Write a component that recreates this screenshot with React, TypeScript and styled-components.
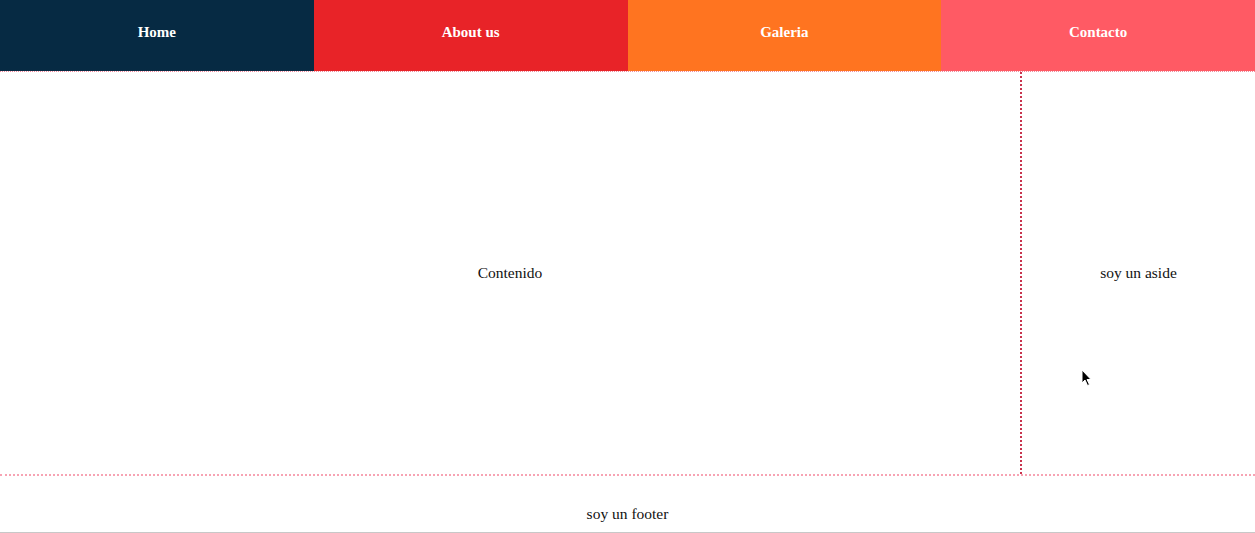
import styled, { createGlobalStyle } from 'styled-components';

const GlobalStyle = createGlobalStyle`
	* {
		box-sizing: border-box;
	}
	html,
	body {
		margin: 0;
		padding: 0;
		background: #fff;
	}
	body {
		font-family: 'Liberation Serif', 'Times New Roman', serif;
		font-size: 15.5px;
		color: #111;
	}
`;

const links = [
	{ label: 'Home', color: '#062a43' },
	{ label: 'About us', color: '#e82328' },
	{ label: 'Galeria', color: '#ff7420' },
	{ label: 'Contacto', color: '#ff5a64' },
];

function App() {
	return (
		<>
			<GlobalStyle />
			<Page>
				<Nav>
					{links.map((link) => (
						<NavItem key={link.label} $bg={link.color}>
							{link.label}
						</NavItem>
					))}
				</Nav>
				<Body>
					<Main>Contenido</Main>
					<Aside>
						soy un aside
						<Cursor viewBox="0 0 12 18" width="12" height="18">
							<path d="M1 1 L1 14 L4 11 L6.5 16.5 L8.5 15.6 L6 10.5 L10 10.5 Z" fill="#000" stroke="#fff" strokeWidth="1" />
						</Cursor>
					</Aside>
				</Body>
				<Footer>soy un footer</Footer>
			</Page>
		</>
	);
}

export default App;

const Page = styled.div`
	width: 1255px;
	height: 533px;
	display: flex;
	flex-flow: column nowrap;
	overflow: hidden;
`;

const Nav = styled.nav`
	display: grid;
	grid-template-columns: repeat(4, 1fr);
	height: 72px;
	border-bottom: 1px dotted #f08a9c;
`;

const NavItem = styled.a<{ $bg: string }>`
	display: flex;
	align-items: center;
	justify-content: center;
	padding-bottom: 7px;
	background-color: ${({ $bg }) => $bg};
	color: #fff;
	font-weight: bold;
	font-size: 15px;
`;

const Body = styled.div`
	display: flex;
	height: 404px;
	border-bottom: 2px dotted #f7a3b3;
`;

const Main = styled.main`
	flex: 0 0 1020px;
	display: flex;
	align-items: center;
	justify-content: center;
`;

const Aside = styled.aside`
	flex: 1;
	display: flex;
	align-items: center;
	justify-content: center;
	position: relative;
	border-left: 2px dotted #c8334d;
`;

const Cursor = styled.svg`
	position: absolute;
	left: 59px;
	top: 297px;
`;

const Footer = styled.footer`
	flex: 1;
	display: flex;
	justify-content: center;
	padding-top: 29px;
	border-bottom: 1px solid #c8c8c8;
`;
